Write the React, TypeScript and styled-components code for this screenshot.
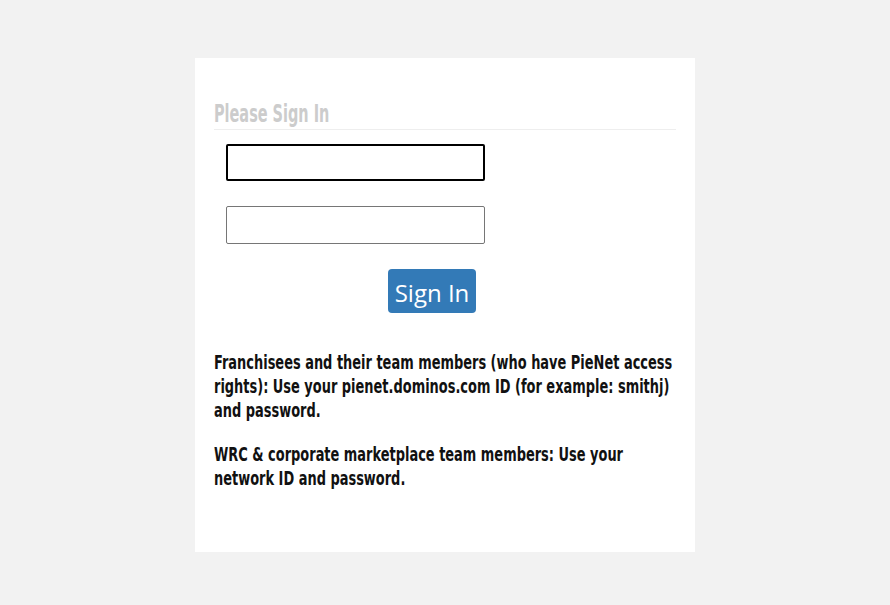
import React from 'react'
import styled, { createGlobalStyle } from 'styled-components'

const CONTENT_WIDTH = 462

const GlobalStyle = createGlobalStyle`
    html, body {
        margin: 0;
        padding: 0;
        background: #f2f2f2;
    }
`

const Page = styled.div`
    min-height: 605px;
    padding-top: 58px;
    box-sizing: border-box;
    display: flex;
    justify-content: center;
    align-items: flex-start;
`

const Card = styled.div`
    width: 500px;
    height: 494px;
    box-sizing: border-box;
    background: #fff;
    padding: 40px 19px 0;
    overflow: hidden;
`

// condensed gothic look: the installed condensed face is still too wide, so squeeze it
const Condensed = styled.div<{ scale: number }>`
    width: ${({ scale }) => CONTENT_WIDTH / scale}px;
    transform: scaleX(${({ scale }) => scale});
    transform-origin: left top;
    font-family: "DejaVu Sans Condensed", "DejaVu Sans", sans-serif;
    font-stretch: condensed;
    font-weight: 700;
`

const HeadingRow = styled.div`
    border-bottom: 1px solid #eee;
    padding-bottom: 1px;
`

const Heading = styled.h2`
    margin: 0;
    padding-top: 2px;
    font-size: 24px;
    line-height: 28px;
    font-weight: 700;
    color: #ccc;
`

const Form = styled.form`
    display: flex;
    flex-direction: column;
    padding: 14px 0 0 12px;
`

const Field = styled.input<{ focused?: boolean }>`
    width: 259px;
    height: ${({ focused }) => (focused ? 37 : 38)}px;
    box-sizing: border-box;
    margin: 0 0 25px;
    border: ${({ focused }) => (focused ? '2px solid #000' : '1px solid #767676')};
    border-radius: 2px;
    outline: none;
    background: #fff;
`

const SubmitButton = styled.button`
    align-self: flex-start;
    margin: 0 0 37px 162px;
    width: 88px;
    height: 44px;
    padding: 2px 0 0;
    border: none;
    border-radius: 4px;
    background: #337ab7;
    color: #fff;
    font-family: "Open Sans", sans-serif;
    font-size: 24px;
    cursor: pointer;
`

const Note = styled.p`
    margin: 0 0 20px;
    font-size: 20px;
    line-height: 24px;
    color: #111;
`

export default function App() {
    return (
        <>
            <GlobalStyle />
            <Page>
                <Card>
                    <HeadingRow>
                        <Condensed scale={0.67}>
                            <Heading>Please Sign In</Heading>
                        </Condensed>
                    </HeadingRow>
                    <Form onSubmit={(e) => e.preventDefault()}>
                        <Field type="text" focused />
                        <Field type="password" />
                        <SubmitButton type="submit">Sign In</SubmitButton>
                    </Form>
                    <Condensed scale={0.72}>
                        <Note>
                            Franchisees and their team members (who have PieNet access rights): Use your
                            pienet.dominos.com ID (for example: smithj) and password.
                        </Note>
                        <Note>WRC &amp; corporate marketplace team members: Use your network ID and password.</Note>
                    </Condensed>
                </Card>
            </Page>
        </>
    )
}
